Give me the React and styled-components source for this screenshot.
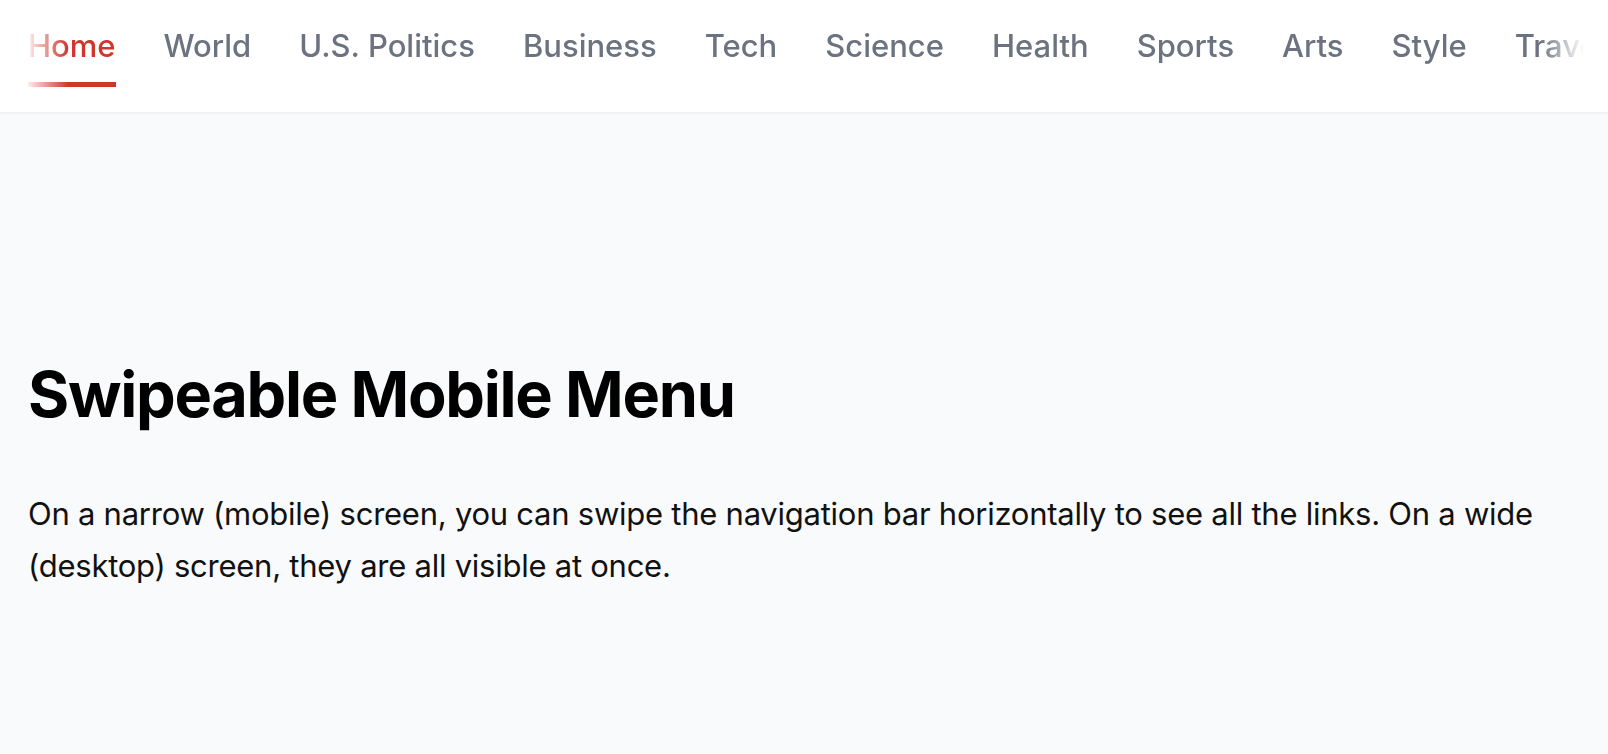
import React from "react";
import styled, { createGlobalStyle } from "styled-components";

const GlobalStyle = createGlobalStyle`
  html, body {
    margin: 0;
    padding: 0;
    background: #f9fafb;
    font-family: Inter, "Noto Sans", "Liberation Sans", sans-serif;
  }
`;

const Header = styled.header`
  background: #fff;
  border-bottom: 2px solid #f1f2f4;
`;

const Nav = styled.nav`
  display: flex;
  gap: 48px;
  padding: 0 28px;
  height: 112px;
  overflow-x: auto;
  white-space: nowrap;
  scrollbar-width: none;
  -webkit-mask-image: linear-gradient(to right, transparent 24px, #000 68px, #000 calc(100% - 68px), transparent calc(100% - 24px));
  mask-image: linear-gradient(to right, transparent 24px, #000 68px, #000 calc(100% - 68px), transparent calc(100% - 24px));

  &::-webkit-scrollbar {
    display: none;
  }
`;

const NavLink = styled.a`
  position: relative;
  display: flex;
  align-items: center;
  height: 91px;
  font-size: 31px;
  font-weight: 500;
  color: ${(props) => (props.active ? "#d0362c" : "#6b7280")};
  text-decoration: none;
  flex-shrink: 0;

  &::after {
    content: "";
    position: absolute;
    left: 0;
    right: 0;
    bottom: 4px;
    height: 5px;
    background: ${(props) => (props.active ? "#d0362c" : "transparent")};
  }
`;

const Main = styled.main`
  padding: 243px 28px 0;
`;

const Title = styled.h1`
  margin: 0 0 55px;
  font-size: 63px;
  font-weight: 700;
  line-height: 1.2;
  letter-spacing: -1.3px;
  color: #000;
`;

const Text = styled.p`
  margin: 0;
  font-size: 31px;
  line-height: 52px;
  letter-spacing: -0.25px;
  color: #111;
`;

const links = ["Home", "World", "U.S. Politics", "Business", "Tech", "Science", "Health", "Sports", "Arts", "Style", "Travel", "Opinion", "Food"];

const App = () => {
  return (
    <>
      <GlobalStyle />
      <Header>
        <Nav>
          {links.map((item, i) => (
            <NavLink key={i} href="#" active={i === 0 ? 1 : 0}>
              {item}
            </NavLink>
          ))}
        </Nav>
      </Header>
      <Main>
        <Title>Swipeable Mobile Menu</Title>
        <Text>
          On a narrow (mobile) screen, you can swipe the navigation bar horizontally to see all the links. On a wide (desktop) screen, they are all visible at once.
        </Text>
      </Main>
    </>
  );
};

export default App;
